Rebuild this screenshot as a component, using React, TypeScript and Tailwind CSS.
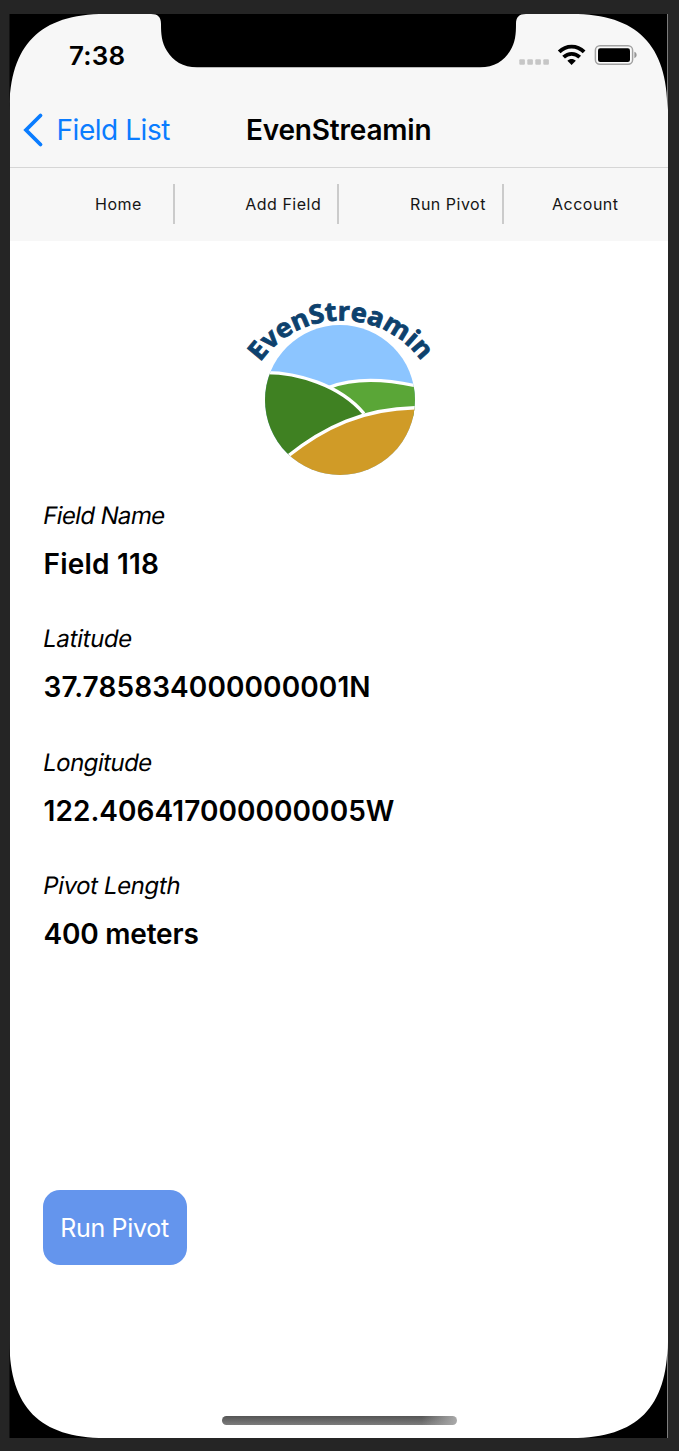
const details = [
  { label: "Field Name", value: "Field 118", labelSpacing: "tracking-[-0.65px]", valueSpacing: "tracking-[0.2px]" },
  { label: "Latitude", value: "37.785834000000001N", labelSpacing: "tracking-[-0.35px]", valueSpacing: "tracking-[0.1px]" },
  { label: "Longitude", value: "122.406417000000005W", labelSpacing: "tracking-[-0.55px]", valueSpacing: "tracking-[0.05px]" },
  { label: "Pivot Length", value: "400 meters", labelSpacing: "tracking-[-0.4px]", valueSpacing: "tracking-[-0.2px]" },
];

function StatusIcons() {
  return (
    <svg className="block h-[26px] w-[122px]" viewBox="518 43 122 26">
      <g fill="#c6c6c6">
        <rect x="519.3" y="59.3" width="5.6" height="5.4" rx="1" />
        <rect x="527.3" y="59.3" width="5.6" height="5.4" rx="1" />
        <rect x="535.3" y="59.3" width="5.6" height="5.4" rx="1" />
        <rect x="543.3" y="59.3" width="5.6" height="5.4" rx="1" />
      </g>
      <g fill="none" stroke="#000" strokeWidth="3.9">
        <path d="M559.2 51.9 C566.3 44.9 577 44.9 584.1 51.9" />
        <path d="M563.6 57.2 C568.3 52.8 575 52.8 579.7 57.2" />
      </g>
      <path d="M571.6 65 L567.4 60.7 C569.8 58.4 573.4 58.4 575.8 60.7 Z" fill="#000" />
      <rect x="595.4" y="45.8" width="37.2" height="18.4" rx="4.5" fill="#fafafa" stroke="#a2a2a2" strokeWidth="1.5" />
      <rect x="598" y="48.2" width="32" height="13.8" rx="2.2" fill="#000" />
      <path d="M634.4 51.8 C637.4 53 637.4 57 634.4 58.2 Z" fill="#969696" />
    </svg>
  );
}

function Logo() {
  return (
    <svg className="block h-[200px] w-[220px]" viewBox="0 0 660 600">
      <defs>
        <clipPath id="disc">
          <circle cx="330" cy="345" r="225" />
        </clipPath>
        <path id="arc" d="M91 232 A297 297 0 0 1 578 234" />
      </defs>
      <g clipPath="url(#disc)">
        <rect x="100" y="110" width="460" height="460" fill="#8cc5ff" />
        <path d="M300 306 C370 280 460 280 560 304 V400 H380 Z" fill="#5aa637" />
        <path d="M90 262 C200 262 330 300 402 384 L180 512 H90 Z" fill="#3f8122" />
        <path d="M175 514 C280 428 400 368 560 368 V580 H175 Z" fill="#d09b27" />
        <g fill="none" stroke="#fff" strokeWidth="10">
          <path d="M298 307 C370 279 460 281 560 303" />
          <path d="M100 263 C200 261 330 300 402 386" />
          <path d="M170 516 C280 428 400 368 570 368" />
        </g>
      </g>
      <text className="font-['Open_Sans',sans-serif] text-[78px] font-bold" fill="#0d416d" stroke="#0d416d" strokeWidth="2.5">
        <textPath href="#arc" textLength="564" lengthAdjust="spacingAndGlyphs">
          EvenStreamin
        </textPath>
      </text>
    </svg>
  );
}

function ScreenMask() {
  return (
    <svg className="pointer-events-none absolute top-0 left-0 h-[1451px] w-[679px]" viewBox="0 0 679 1451">
      <path d="M9.5 14 V110 C9.5 45 40 14 105 14 Z" />
      <path d="M667.5 14 V110 C667.5 45 637 14 572 14 Z" />
      <path d="M9.5 1438 V1342 C9.5 1407 40 1438 105 1438 Z" />
      <path d="M667.5 1438 V1342 C667.5 1407 637 1438 572 1438 Z" />
      <path d="M151 14 C158 14 161 17 161 24 C161 34 161.5 42 167 51 C173 61 183 67.3 197 67.3 H480 C494 67.3 504 61 510 51 C515.5 42 516 34 516 24 C516 17 519 14 526 14 Z" />
    </svg>
  );
}

export default function App() {
  return (
    <div className="relative h-[1451px] w-[679px] overflow-hidden bg-[#252525] pt-[14px] pl-[9.5px] font-['Inter',sans-serif] text-black">
      <main className="flex h-[1424px] w-[658px] flex-col bg-white">
        <header className="h-[153.5px] shrink-0 border-b-[1.5px] border-[#d6d6d6] bg-[#f7f7f7]">
          <div className="flex h-[80px] items-start justify-between pr-[28px] pl-[59.5px]">
            <span className="mt-[26px] text-[26px] leading-[32px] font-semibold tracking-[0.2px]">7:38</span>
            <div className="mt-[29px]">
              <StatusIcons />
            </div>
          </div>
          <div className="flex h-[72px] items-center pl-[13.5px]">
            <svg className="h-[36px] w-[22px] shrink-0" viewBox="0 0 22 36">
              <path d="M17.5 3.5 L3 18 L17.5 32.5" fill="none" stroke="#0a7cff" strokeWidth="3.8" strokeLinecap="round" strokeLinejoin="miter" />
            </svg>
            <span className="ml-[11.5px] w-[189.5px] text-[28px] leading-[36px] tracking-[-0.45px] text-[#0a7cff]">Field List</span>
            <h1 className="text-[28px] leading-[36px] font-semibold tracking-[-0.2px] whitespace-nowrap">EvenStreamin</h1>
          </div>
        </header>
        <nav className="grid h-[73.5px] shrink-0 grid-cols-[165px_164.5px_165px_1fr] items-center bg-[#f7f7f7] text-[16px] tracking-[0.5px] text-[#151515]">
          <div className="flex h-10 items-center justify-center border-r-2 border-[#cbcbcb] pl-[55px]">Home</div>
          <div className="flex h-10 items-center justify-center border-r-2 border-[#cbcbcb] pl-[55px]">Add Field</div>
          <div className="flex h-10 items-center justify-center border-r-2 border-[#cbcbcb] pl-[55px]">Run Pivot</div>
          <div className="flex h-10 items-center justify-center pr-px">Account</div>
        </nav>
        <div className="mt-11 flex shrink-0 justify-center pl-[3px]">
          <Logo />
        </div>
        <dl className="mt-[10px] pl-[34px]">
          {details.map((d) => (
            <div key={d.label} className="h-[123.3px]">
              <dt className="-ml-[2px] h-[42px] text-[24px] leading-[42px]">
                <span className={`inline-block origin-[0_70%] -skew-x-[10deg] ${d.labelSpacing}`}>{d.label}</span>
              </dt>
              <dd className={`mt-[4px] h-[46px] text-[28px] leading-[46px] font-semibold ${d.valueSpacing}`}>{d.value}</dd>
            </div>
          ))}
        </dl>
        <button className="mt-[202px] ml-[33.5px] flex h-[75px] w-[144px] items-center justify-center rounded-[17px] bg-[#6495ed] pt-[2px] pr-px text-[25px] tracking-[-0.3px] text-white">
          Run Pivot
        </button>
        <div className="mt-auto mb-[13px] ml-[212px] h-[9px] w-[235px] rounded-full bg-[linear-gradient(to_right,#aaaaaa00_85%,#aaaaaa_100%),linear-gradient(to_bottom,#555555,#7c7c7c)]" />
      </main>
      <ScreenMask />
    </div>
  );
}
